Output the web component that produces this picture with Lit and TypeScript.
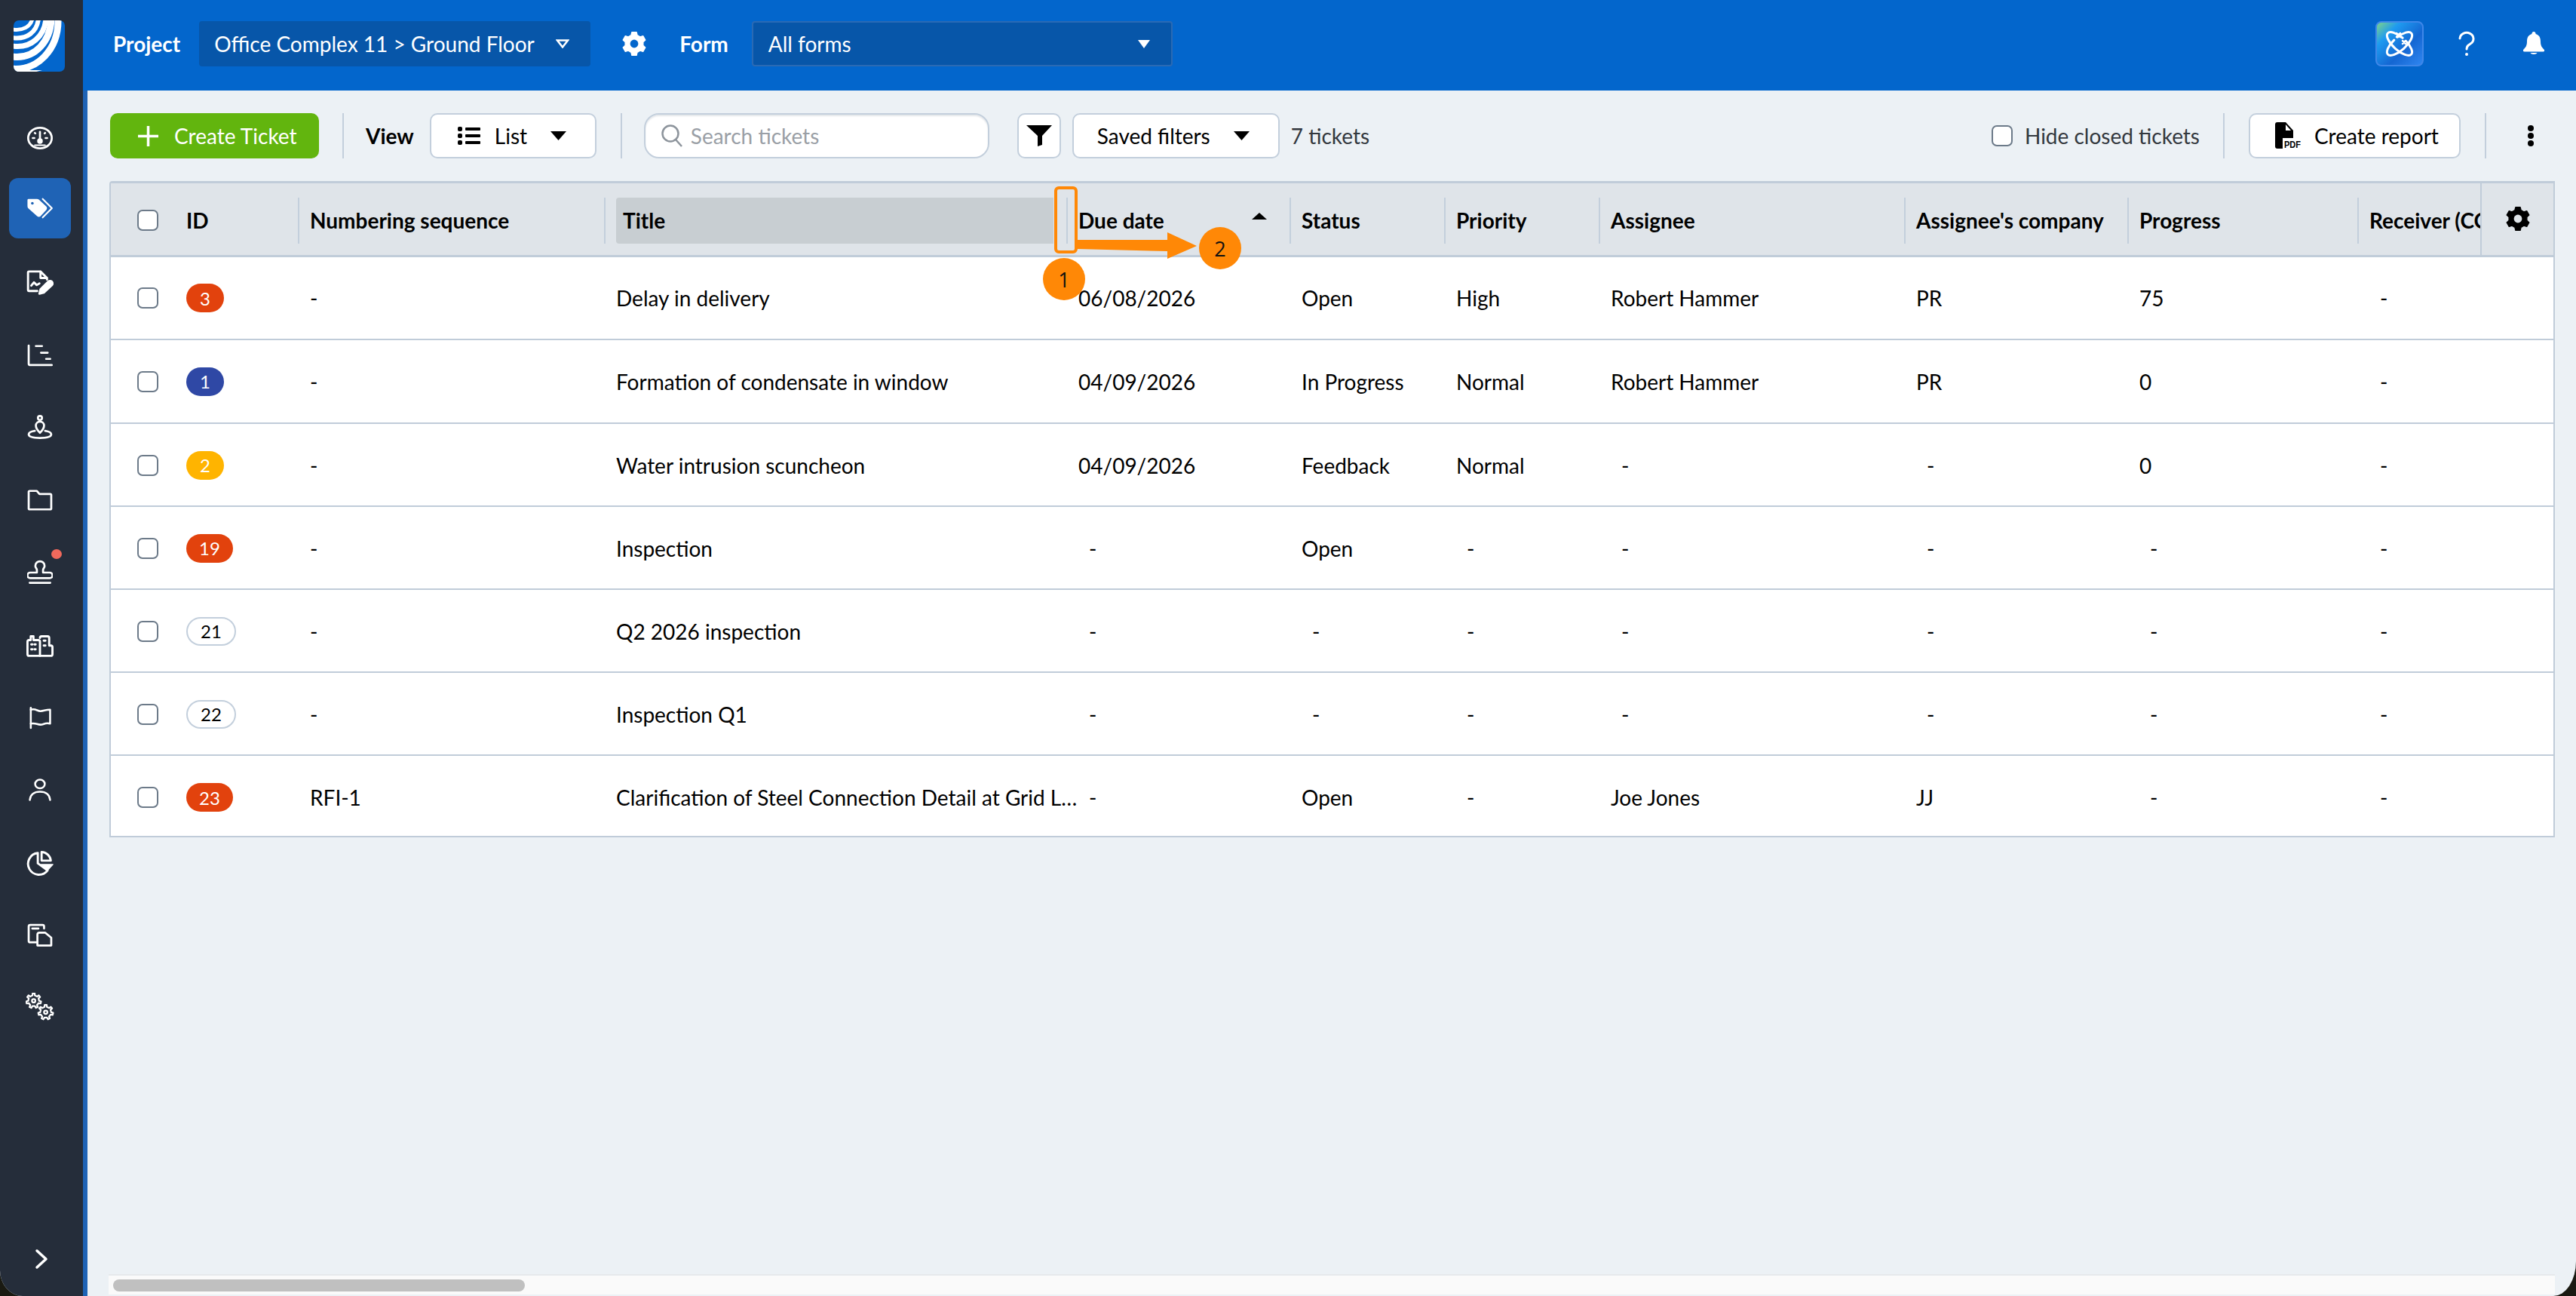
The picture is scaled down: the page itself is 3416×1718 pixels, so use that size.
import { LitElement, html, css, svg } from 'lit'
import { customElement } from 'lit/decorators.js'

const HEAD = ['ID', 'Numbering sequence', 'Title', 'Due date', 'Status', 'Priority', 'Assignee', "Assignee's company", 'Progress', 'Receiver (CC)']

type Row = { id: string; tone: string; cells: string[]; h: number; nudge: number }

const ROWS: Row[] = [
  { id: '3', tone: 'red', h: 110, nudge: 0, cells: ['-', 'Delay in delivery', '06/08/2026', 'Open', 'High', 'Robert Hammer', 'PR', '75', '-'] },
  { id: '1', tone: 'blue', h: 111, nudge: 0, cells: ['-', 'Formation of condensate in window', '04/09/2026', 'In Progress', 'Normal', 'Robert Hammer', 'PR', '0', '-'] },
  { id: '2', tone: 'yellow', h: 110, nudge: 1, cells: ['-', 'Water intrusion scuncheon', '04/09/2026', 'Feedback', 'Normal', '-', '-', '0', '-'] },
  { id: '19', tone: 'red', h: 110, nudge: 1, cells: ['-', 'Inspection', '-', 'Open', '-', '-', '-', '-', '-'] },
  { id: '21', tone: 'plain', h: 110, nudge: 1, cells: ['-', 'Q2 2026 inspection', '-', '-', '-', '-', '-', '-', '-'] },
  { id: '22', tone: 'plain', h: 110, nudge: 1, cells: ['-', 'Inspection Q1', '-', '-', '-', '-', '-', '-', '-'] },
  { id: '23', tone: 'red', h: 106, nudge: 4, cells: ['RFI-1', 'Clarification of Steel Connection Detail at Grid Line 7', '-', 'Open', '-', 'Joe Jones', 'JJ', '-', '-'] },
]

// outline of a cog, used for the header gears and the settings icon
const cogPath = (cx: number, cy: number, R: number, r: number, n: number, outer = 0.2, inner = 0.34) => {
  const pts: string[] = []
  for (let i = 0; i < n; i++) {
    const a = -Math.PI / 2 + (i * 2 * Math.PI) / n
    const o = outer * (6 / n)
    const b = inner * (6 / n)
    for (const [rad, ang] of [[r, a - b], [R, a - o], [R, a + o], [r, a + b]] as [number, number][]) {
      pts.push(`${(cx + rad * Math.cos(ang)).toFixed(2)} ${(cy + rad * Math.sin(ang)).toFixed(2)}`)
    }
  }
  return `M${pts.join('L')}Z`
}

const line = (body: unknown, size = 34) => html`<svg width=${size} height=${size} viewBox="0 0 50 50" fill="none" stroke="#fff" stroke-width="4" stroke-linecap="round" stroke-linejoin="round">${body}</svg>`

const NAV = [
  line(svg`<ellipse cx="25" cy="25" rx="23" ry="20"/><path d="M25 13v15"/><circle cx="25" cy="31" r="3.500" fill="#fff"/><path d="M11 25h3M36 25h3M15 15l1 1M35 15l-1 1" stroke-width="4"/><path d="M15 39h20" stroke-width="3"/>`),
  line(svg`<path d="M4 10h15a4 4 0 0 1 3 1l13 12a3 3 0 0 1 0 4L25 38a3 3 0 0 1-4 0L5 24a4 4 0 0 1-1-3z" fill="#fff" stroke="#fff"/><circle cx="11" cy="16" r="2.500" fill="#1f63b5" stroke="none"/><path d="M30 8l17 17-17 17" stroke-width="3"/>`, 36),
  line(svg`<path d="M26 4H5a2 2 0 0 0-2 2v32a2 2 0 0 0 2 2h15M26 4l12 12v3M26 4v12h12"/><path d="M9 30l5-6 5 5 5-3"/><path d="M24 45l2-8 14-14a4 4 0 0 1 7 6L32 43z" fill="#fff"/>`, 36),
  line(svg`<path d="M3 6v35a3 3 0 0 0 3 3h42"/><path d="M17 7h12M27 20h13M37 32h8"/>`),
  line(svg`<circle cx="25" cy="6" r="4"/><path d="M25 35c-5-5-8-9-8-14a8 8 0 0 1 16 0c0 5-3 9-8 14z"/><path d="M15 31c-7 1-12 3-12 7 0 5 10 7 22 7s22-2 22-7c0-4-5-6-12-7"/>`),
  line(svg`<path d="M3 9a2 2 0 0 1 2-2h14l5 6h21a2 2 0 0 1 2 2v26a2 2 0 0 1-2 2H5a2 2 0 0 1-2-2z"/>`),
  line(svg`<path d="M19 20c0-3-3-4-3-8a9 9 0 0 1 18 0c0 4-3 5-3 8v5h13a4 4 0 0 1 0 11H6a4 4 0 0 1 0-11h13z"/><path d="M5 45h40"/>`),
  line(svg`<path d="M2 19a3 3 0 0 1 3-3h3V9h5v7h9a3 3 0 0 1 3 3v26H5a3 3 0 0 1-3-3z"/><path d="M25 12a3 3 0 0 1 3-3h11a3 3 0 0 1 3 3v14h3a3 3 0 0 1 3 3v13a3 3 0 0 1-3 3H25"/><path d="M9 24h2M15 24h2M9 33h2M15 33h2M32 17h3M32 26h3" stroke-width="4"/>`, 36),
  line(svg`<path d="M6 5v42"/><path d="M6 9c10-3 13 3 20 3s10-3 20-3v29c-10-3-13 2-20 2s-10-4-20-2"/>`, 32),
  line(svg`<ellipse cx="25" cy="13" rx="10" ry="9"/><path d="M4 46c1-11 9-17 21-17s20 6 21 17"/>`, 32),
  line(svg`<path d="M21 8a20 20 0 1 0 18 32L21 27z"/><path d="M28 6a18 18 0 0 1 17 16H28z"/><path d="M27 29h22l-11 12z" fill="#fff" stroke-width="1.500"/>`, 36),
  line(svg`<path d="M18 40H6a3 3 0 0 1-3-3V9a3 3 0 0 1 3-3h24a3 3 0 0 1 3 3v4"/><path d="M10 13h12"/><path d="M20 46V25a4 4 0 0 1 4-4h11l12 10v15z"/>`),
  line(svg`<path d=${cogPath(14, 14, 13, 9.5, 7, 0.16, 0.26)} stroke-width="3"/><circle cx="14" cy="14" r="3" stroke-width="3"/><path d=${cogPath(35, 34, 13, 9.5, 7, 0.16, 0.26)} stroke-width="3"/><circle cx="35" cy="34" r="3" stroke-width="3"/>`, 38),
]

const gear = (size: number, color: string, hole: string) => html`<svg width=${size} height=${size} viewBox="0 0 24 24"><path fill=${color} stroke=${color} stroke-width="1" stroke-linejoin="round" d=${cogPath(12, 12, 11, 8.500, 6)}/><circle cx="12" cy="12" r="3.800" fill=${hole}/></svg>`

const caret = html`<svg width="21" height="12" viewBox="0 0 21 12"><path d="M0 0h21L10.500 12z"/></svg>`

@customElement('app-root')
export class AppRoot extends LitElement {
  static styles = css`
    :host {
      display: block;
      width: 3416px;
      height: 1718px;
      overflow: hidden;
      font-family: Lato, "Open Sans", sans-serif;
      font-size: 28px;
      color: #000;
      background: #1a1a12;
    }
    .shell {
      display: flex;
      height: 1718px;
      background: #ecf1f5;
      overflow: hidden;
      border-radius: 0 0 30px 30px / 0 0 46px 34px;
    }

    .rail {
      width: 110px;
      flex: none;
      background: #252d3a;
      display: flex;
      flex-direction: column;
      align-items: center;
      box-sizing: border-box;
      padding-right: 4px;
    }
    .logo { margin: 27px 0 0 -2px; width: 68px; height: 68px; border-radius: 7px; overflow: hidden; }
    .nav { margin-top: 40px; display: flex; flex-direction: column; align-items: center; }
    .nav-item {
      position: relative;
      width: 82px;
      height: 96px;
      display: flex;
      align-items: center;
      justify-content: center;
    }
    .tile { position: absolute; left: 0; top: 5px; width: 82px; height: 80px; border-radius: 12px; background: #1f63b5; }
    .nav-item svg { position: relative; }
    .nav-item.active svg { top: -3px; }
    .dot { position: absolute; top: 17px; left: 56px; width: 14px; height: 13px; border-radius: 50%; background: #f0695c; }
    .expand { margin: auto 0 35px 4px; display: flex; }

    .main { flex: 1; min-width: 0; display: flex; flex-direction: column; position: relative; }

    .topbar {
      height: 120px;
      flex: none;
      box-sizing: border-box;
      padding: 0 0 4px 40px;
      background: #0366cc;
      display: flex;
      align-items: center;
      color: #fff;
    }
    .topbar b { font-weight: 700; }
    .picker {
      height: 60px;
      box-sizing: border-box;
      background: #0756a9;
      border-radius: 4px;
      display: flex;
      align-items: center;
      justify-content: space-between;
      padding: 0 28px 0 20px;
      color: #fff;
    }
    .project { width: 519px; margin-left: 25px; }
    .cog { margin-left: 41px; display: flex; }
    .form-label { margin-left: 43px; }
    .form { width: 558px; margin-left: 31px; border: 2px solid #2a6ab4; }
    .top-right { margin-left: auto; display: flex; align-items: center; padding-right: 42px; }
    .ai {
      width: 64px;
      height: 60px;
      box-sizing: border-box;
      border-radius: 8px;
      border: 2px solid #3f87e8;
      background: linear-gradient(135deg, #7dd38b 0%, #1e9bf0 26%, #1466d2 62%, #2f86f0 100%);
      display: flex;
      align-items: center;
      justify-content: center;
    }
    .help { margin-left: 46px; display: flex; }
    .bell { margin-left: 64px; display: flex; }

    .content {
      flex: 1;
      min-height: 0;
      display: flex;
      flex-direction: column;
      border-left: 6px solid #1f63b5;
    }

    .toolbar {
      height: 60px;
      flex: none;
      margin-top: 30px;
      padding: 0 56px 0 30px;
      display: flex;
      align-items: center;
    }
    .btn {
      height: 60px;
      box-sizing: border-box;
      background: #fff;
      border: 2px solid #c3cfdc;
      border-radius: 10px;
      display: flex;
      align-items: center;
      color: #000;
      flex: none;
    }
    .create {
      width: 277px;
      background: #62b50e;
      border: none;
      color: #fff;
      padding-left: 37px;
      gap: 21px;
    }
    .sep { width: 2px; height: 60px; background: #c3cfdc; flex: none; }
    .sep.after-create { margin-left: 31px; }
    .sep.after-list { margin-left: 32px; }
    .sep.after-hide { margin-left: 31px; }
    .view-label { font-weight: 700; margin: 0 21px 0 29px; }
    .list { width: 221px; padding-left: 35px; gap: 19px; }
    .list .down { margin-left: 12px; display: flex; }
    .search {
      width: 458px;
      border-radius: 20px;
      margin-left: 29px;
      padding-left: 21px;
      gap: 11px;
      color: #9a9fa6;
      box-shadow: inset 0 2px 2px #e4e7ea;
    }
    .funnel { width: 58px; margin-left: 37px; justify-content: center; }
    .saved { width: 275px; margin-left: 15px; padding-left: 31px; gap: 31px; }
    .saved svg { flex: none; }
    .count { margin-left: 15px; color: #33383e; }
    .toolbar-right { margin-left: auto; display: flex; align-items: center; }
    .hide { display: flex; align-items: center; gap: 16px; color: #33383e; }
    .check {
      display: block;
      width: 28px;
      height: 28px;
      box-sizing: border-box;
      border: 2px solid #6c7a89;
      border-radius: 7px;
      background: #fff;
      flex: none;
    }
    .report { width: 281px; margin: 0 32px; padding-left: 33px; gap: 16px; }
    .kebab { margin-left: 55px; display: flex; }

    .table {
      margin: 30px 28px 0 29px;
      border: 2px solid #c0ccd9;
      border-top-width: 3px;
      border-radius: 4px 0 0 0;
      background: #fff;
      flex: none;
    }
    .head-wrap {
      position: relative;
      background: #dfe4e9;
      height: 98px;
      box-sizing: border-box;
      border-bottom: 3px solid #c0ccd9;
      overflow: hidden;
    }
    .grid {
      display: grid;
      grid-template-columns: 100px 148px 406px 613px 296px 205px 205px 405px 296px 305px 400px;
      grid-template-rows: 1fr;
      align-items: center;
    }
    .head { height: 95px; font-weight: 700; align-items: stretch; }
    .th {
      position: relative;
      display: flex;
      align-items: center;
      padding: 3px 0 0 16px;
      white-space: nowrap;
      box-sizing: border-box;
    }
    .th.check-cell { padding-left: 35px; }
    .th.id-head { padding-left: 0; }
    .th.ruled::before {
      content: '';
      position: absolute;
      left: 0;
      top: 19px;
      height: 61px;
      width: 2px;
      background: #c3cfdc;
    }
    .th.sorted { padding-left: 25px; }
    .sorted-bg {
      position: absolute;
      left: 16px;
      top: 19px;
      width: 580px;
      height: 61px;
      background: #c8ced2;
      border-radius: 4px 0 0 4px;
    }
    .th span { position: relative; }
    .arrow {
      position: absolute;
      left: 246px;
      top: 39px;
      width: 0;
      height: 0;
      border: 10px solid transparent;
      border-top: 0;
      border-bottom: 9px solid #000;
    }
    .settings {
      position: absolute;
      right: 0;
      top: 0;
      width: 97px;
      height: 95px;
      box-sizing: border-box;
      border-left: 2px solid #c0ccd9;
      background: #dfe4e9;
      display: flex;
      justify-content: center;
      align-items: flex-start;
      padding-top: 30px;
    }
    .row { box-sizing: border-box; border-bottom: 2px solid #c0ccd9; overflow: hidden; }
    .row:last-child { border-bottom: 0; }
    .td { padding-left: 16px; white-space: nowrap; overflow: hidden; text-overflow: ellipsis; min-width: 0; }
    .td.check-cell { padding-left: 35px; overflow: visible; }
    .td.title { margin-right: -16px; }
    .td.dash { margin-left: 18px; padding-left: 12px; }
    .td.id-cell { padding-left: 0; overflow: visible; display: flex; }
    .badge {
      height: 38px;
      min-width: 50px;
      box-sizing: border-box;
      border-radius: 19px;
      padding: 0 17px;
      display: inline-flex;
      align-items: center;
      justify-content: center;
      font-size: 24px;
      color: #fff;
    }
    .badge.short { padding: 0; width: 50px; }
    .badge.red { background: #e2420d; }
    .badge.blue { background: #2f48a5; }
    .badge.yellow { background: #ffb400; }
    .badge.plain { background: #fff; color: #000; border: 2px solid #c3cfdc; }

    .scrollbar {
      flex: none;
      margin: auto 28px 2px 28px;
      height: 27px;
      box-sizing: border-box;
      border-top: 2px solid #e6e9ec;
      background: #fafafa;
      display: flex;
      align-items: center;
      padding-left: 6px;
    }
    .thumb { width: 546px; height: 16px; border-radius: 8px; background: #c0c0c0; }

    .pin {
      position: absolute;
      width: 56px;
      height: 56px;
      border-radius: 50%;
      background: #ff8806;
      color: #111;
      font-family: "Open Sans", sans-serif;
      font-size: 27px;
      display: flex;
      align-items: center;
      justify-content: center;
    }
    .pin.one { left: 1273px; top: 342px; }
    .pin.two { left: 1480px; top: 301px; }
    .mark {
      position: absolute;
      left: 1288px;
      top: 247px;
      width: 31px;
      height: 89px;
      box-sizing: border-box;
      border: 4px solid #ff8806;
      border-radius: 6px;
    }
    .drag { position: absolute; left: 1319px; top: 306px; }
  `

  render() {
    return html`
      <div class="shell">
        <aside class="rail">
          <div class="logo">
            <svg width="68" height="68" viewBox="0 0 68 68">
              <rect width="68" height="68" fill="#0366cc"/>
              <g fill="none" stroke="#fff">
                <path d="M-2 12C12 14 22 9 25 -2" stroke-width="5"/>
                <path d="M-2 23C18 26 31 15 33 -2" stroke-width="6"/>
                <path d="M-2 34C24 38 41 20 43 -2" stroke-width="7"/>
                <path d="M-2 48C30 52 49 26 50 -2" stroke-width="9"/>
                <path d="M-4 64C32 68 60 38 59 -2" stroke-width="9"/>
              </g>
              <path d="M0 66H38L0 76z" fill="#fff"/>
            </svg>
          </div>
          <div class="nav">
            ${NAV.map((icon, i) => html`
              <div class="nav-item ${i === 1 ? 'active' : ''}">
                ${i === 1 ? html`<span class="tile"></span>` : ''}
                ${icon}
                ${i === 6 ? html`<span class="dot"></span>` : ''}
              </div>`)}
          </div>
          <div class="expand">
            <svg width="18" height="28" viewBox="0 0 18 28" fill="none" stroke="#fff" stroke-width="3.500" stroke-linecap="round" stroke-linejoin="round"><path d="M3 3l12 11L3 25"/></svg>
          </div>
        </aside>

        <div class="main">
          <header class="topbar">
            <b>Project</b>
            <div class="picker project">
              <span>Office Complex 11 &gt; Ground Floor</span>
              <svg width="18" height="12" viewBox="0 0 18 12" fill="none" stroke="#fff" stroke-width="2.500"><path d="M2 1.500h14L9 10.500z"/></svg>
            </div>
            <span class="cog">${gear(34, '#fff', '#0366cc')}</span>
            <b class="form-label">Form</b>
            <div class="picker form">
              <span>All forms</span>
              <svg width="16" height="11" viewBox="0 0 16 11"><path d="M0 0h16L8 11z" fill="#fff"/></svg>
            </div>
            <div class="top-right">
              <div class="ai">
                <svg width="38" height="34" viewBox="0 0 38 34" fill="none" stroke="#fff" stroke-width="3" stroke-linecap="round">
                  <g stroke-dasharray="70 6 60">
                    <ellipse cx="19" cy="17" rx="21" ry="8.500" transform="rotate(42 19 17)"/>
                    <ellipse cx="19" cy="17" rx="21" ry="8.500" transform="rotate(-42 19 17)"/>
                  </g>
                  <path d="M15 3l5 5M20 3l-5 5M23 13l4 4M27 13l-4 4" stroke-width="2.500"/>
                </svg>
              </div>
              <span class="help">
                <svg width="22" height="34" viewBox="0 0 22 34" fill="none" stroke="#fff" stroke-width="3" stroke-linecap="round"><path d="M2 10a9 8 0 1 1 14 7c-3 2-5 3-5 7"/><circle cx="11" cy="31" r="2" fill="#fff" stroke="none"/></svg>
              </span>
              <span class="bell">
                <svg width="28" height="32" viewBox="0 0 28 32"><path fill="#fff" d="M14 0a2.500 2.500 0 0 1 2.500 3C22 4.500 23 9 23 13c0 6 2 8 5 11 .6 1 0 2.500-1.500 2.500h-25C0 26.500-.6 25 0 24c3-3 5-5 5-11 0-4 1-8.500 6.500-10A2.500 2.500 0 0 1 14 0zM9.500 28h9c-1 2.500-8 2.500-9 0z"/></svg>
              </span>
            </div>
          </header>

          <div class="content">
            <div class="toolbar">
              <div class="btn create">
                <svg width="27" height="27" viewBox="0 0 27 27" stroke="#fff" stroke-width="3.500"><path d="M13.500 0v27M0 13.500h27"/></svg>
                <span>Create Ticket</span>
              </div>
              <span class="sep after-create"></span>
              <span class="view-label">View</span>
              <div class="btn list">
                <svg width="30" height="26" viewBox="0 0 30 26"><rect x="0" y="1" width="6" height="6" rx="2"/><rect x="0" y="10" width="6" height="6" rx="2"/><rect x="0" y="19" width="6" height="6" rx="2"/><rect x="10" y="2" width="20" height="4" rx="1"/><rect x="10" y="11" width="20" height="4" rx="1"/><rect x="10" y="20" width="20" height="4" rx="1"/></svg>
                <span>List</span>
                <span class="down">${caret}</span>
              </div>
              <span class="sep after-list"></span>
              <div class="btn search">
                <svg width="28" height="30" viewBox="0 0 28 30" fill="none" stroke="#8d949c" stroke-width="2.500"><circle cx="12" cy="12" r="10.500"/><path d="M19 20l8 9"/></svg>
                <span>Search tickets</span>
              </div>
              <div class="btn funnel">
                <svg width="34" height="28" viewBox="0 0 34 28"><path d="M0 0h34L21 14v12l-6 2V14z"/></svg>
              </div>
              <div class="btn saved">
                <span>Saved filters</span>
                ${caret}
              </div>
              <span class="count">7 tickets</span>
              <div class="toolbar-right">
                <label class="hide"><span class="check"></span><span>Hide closed tickets</span></label>
                <span class="sep after-hide"></span>
                <div class="btn report">
                  <svg width="36" height="42" viewBox="0 0 36 42">
                    <path d="M3 3h11l10 11v10H10v14H3a3 3 0 0 1-3-3V6a3 3 0 0 1 3-3z"/>
                    <path d="M14 6v8h7z" fill="#fff"/>
                    <text x="12" y="37" font-family="Liberation Sans, sans-serif" font-size="12" font-weight="700" textLength="22" lengthAdjust="spacingAndGlyphs">PDF</text>
                  </svg>
                  <span>Create report</span>
                </div>
                <span class="sep"></span>
                <span class="kebab"><svg width="8" height="28" viewBox="0 0 8 28"><circle cx="4" cy="4" r="4"/><circle cx="4" cy="14" r="4"/><circle cx="4" cy="24" r="4"/></svg></span>
              </div>
            </div>

            <section class="table">
              <div class="head-wrap">
                <div class="grid head">
                  <div class="th check-cell"><span class="check"></span></div>
                  ${HEAD.map((label, i) => html`
                    <div class="th ${i === 0 ? 'id-head' : 'ruled'} ${i === 2 ? 'sorted' : ''}">
                      ${i === 2 ? html`<i class="sorted-bg"></i>` : ''}
                      <span>${label}</span>
                      ${i === 3 ? html`<i class="arrow"></i>` : ''}
                    </div>`)}
                </div>
                <div class="settings">${gear(34, '#000', '#dfe4e9')}</div>
              </div>
              <div class="rows">
                ${ROWS.map(r => html`
                  <div class="grid row" style="height:${r.h}px;padding-top:${r.nudge}px">
                    <div class="td check-cell"><span class="check"></span></div>
                    <div class="td id-cell"><span class="badge ${r.tone} ${r.id.length === 1 ? 'short' : ''}">${r.id}</span></div>
                    ${r.cells.map((c, i) => html`<div class="td ${i === 1 ? 'title' : ''} ${c === '-' && i > 1 ? 'dash' : ''}">${c}</div>`)}
                    <div></div>
                  </div>`)}
              </div>
            </section>

            <div class="scrollbar"><div class="thumb"></div></div>
          </div>

          <div class="mark"></div>
          <svg class="drag" width="160" height="40" viewBox="0 0 160 40"><path d="M0 12h119V2l39 18-39 17V27L0 24z" fill="#ff8806"/></svg>
          <div class="pin one">1</div>
          <div class="pin two">2</div>
        </div>
      </div>
    `
  }
}
